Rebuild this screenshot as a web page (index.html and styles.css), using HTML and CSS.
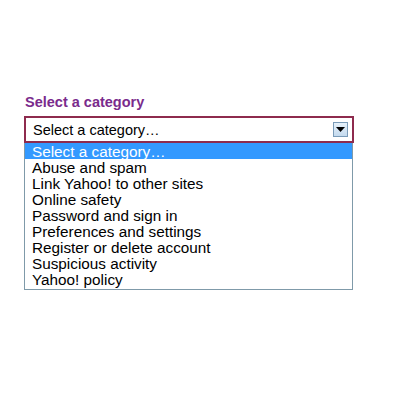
FILE: index.html
```html
<!DOCTYPE html>
<html>
<head>
<meta charset="utf-8">
<link rel="stylesheet" href="styles.css">
</head>
<body>
<div class="wrap">
  <div class="label">Select a category</div>
  <div class="select">
    <span class="value">Select a category…</span>
    <span class="btn"><svg width="9" height="5" viewBox="0 0 9 5"><path d="M0 0H9L4.5 5Z" fill="#000"/></svg></span>
  </div>
  <ul class="list">
    <li class="sel">Select a category…</li>
    <li>Abuse and spam</li>
    <li>Link Yahoo! to other sites</li>
    <li>Online safety</li>
    <li>Password and sign in</li>
    <li>Preferences and settings</li>
    <li>Register or delete account</li>
    <li>Suspicious activity</li>
    <li>Yahoo! policy</li>
  </ul>
</div>
</body>
</html>
```
FILE: styles.css
```css
html, body { margin: 0; padding: 0; background: #fff; }
body { font-family: "Liberation Sans", Arial, sans-serif; }
.wrap { padding: 94px 0 0 24px; width: 330px; }
.label { color: #7a2b8c; font-weight: bold; font-size: 14.5px; line-height: 16px; padding-left: 1px; margin-bottom: 6px; }
.select { height: 23px; border: 2px solid #8e2b4e; display: flex; align-items: center; justify-content: space-between; padding: 0 4px 0 7px; box-sizing: content-box; width: 315px; }
.value { font-size: 14.5px; color: #000; }
.btn { width: 13px; height: 13px; border: 1px solid #7a9bb8; background: linear-gradient(#e6f1fa, #c4daee); display: flex; align-items: center; justify-content: center; }
.list { list-style: none; margin: 0; padding: 0 0 2px 0; border: 1px solid #7f9aa9; border-top: none; width: 327px; }
.list li { font-size: 15.3px; line-height: 17px; height: 16px; padding-left: 7px; color: #000; overflow: visible; }
.list li.sel { background: #3399ff; color: #fff; }
```
